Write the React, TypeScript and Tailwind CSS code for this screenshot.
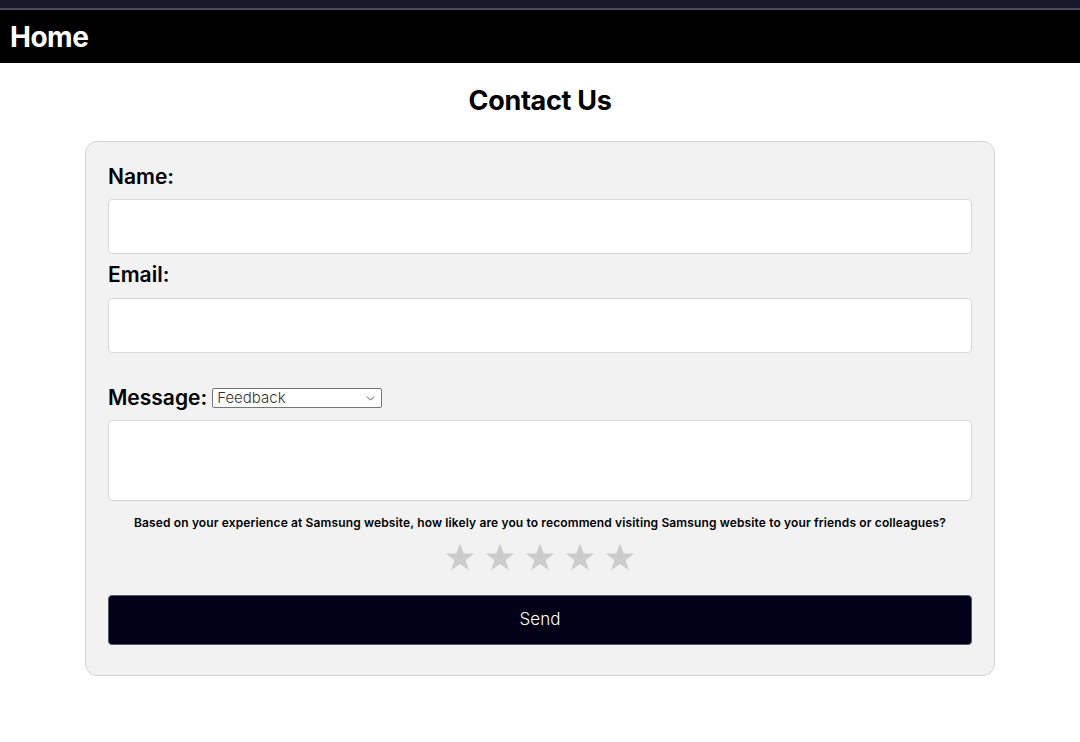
import { ChevronDown } from "lucide-react"

const font = { fontFamily: "Inter, 'Noto Sans', sans-serif" }

function Star() {
  return (
    <svg viewBox="0 0 24 24" className="h-[34px] w-[34px]" fill="#cccccc">
      <path d="M12 2.5l2.6 7.1h7.5l-6.1 4.5 2.3 7.3L12 16.9l-6.3 4.5 2.3-7.3-6.1-4.5h7.5z" />
    </svg>
  )
}

export default function App() {
  return (
    <div className="min-h-[742px] bg-white text-black" style={font}>
      <div className="h-[8px] bg-[#17172a]" />
      <div className="h-[2px] bg-[#4a4a5c]" />
      <header className="flex h-[53px] items-center bg-black px-[10px]">
        <span className="text-[28px] font-bold tracking-[-0.5px] text-white">Home</span>
      </header>

      <main className="flex flex-col items-center">
        <h1 className="mt-[21px] text-[27px] font-bold leading-[34px] tracking-[-0.3px]">Contact Us</h1>

        <form className="mt-[23px] w-[910px] rounded-[12px] border border-[#d3d3d3] bg-[#f2f2f2] px-[22px] pb-[30px] pt-[21px]">
          <label className="block text-[21px] font-semibold leading-[28px]">Name:</label>
          <input className="mt-[8px] block h-[55px] w-full rounded-[4px] border border-[#d6d6d6] bg-white" />

          <label className="mt-[7px] block text-[21px] font-semibold leading-[28px]">Email:</label>
          <input className="mt-[9px] block h-[55px] w-full rounded-[4px] border border-[#d6d6d6] bg-white" />

          <div className="mt-[31px] flex items-center gap-[5px]">
            <label className="text-[21px] font-semibold leading-[28px]">Message:</label>
            <div className="flex h-[20px] w-[170px] items-center justify-between rounded-[2px] border border-[#767676] bg-white px-[4px] text-[15px] font-light text-[#333]">
              <span>Feedback</span>
              <ChevronDown className="h-[13px] w-[13px]" strokeWidth={1.5} />
            </div>
          </div>
          <textarea className="mt-[8px] block h-[81px] w-full resize-none rounded-[4px] border border-[#d6d6d6] bg-white" />

          <p className="mt-[14px] text-center text-[12px] font-semibold leading-[16px] tracking-[0.13px]">
            Based on your experience at Samsung website, how likely are you to recommend visiting Samsung website to your friends or colleagues?
          </p>

          <div className="mt-[9px] flex justify-center gap-[6px]">
            <Star />
            <Star />
            <Star />
            <Star />
            <Star />
          </div>

          <button
            type="button"
            className="mt-[21px] flex h-[50px] w-full items-center justify-center rounded-[4px] border border-[#555a6a] bg-[#010218] text-[17px] font-light text-white"
          >
            Send
          </button>
        </form>
      </main>
    </div>
  )
}
